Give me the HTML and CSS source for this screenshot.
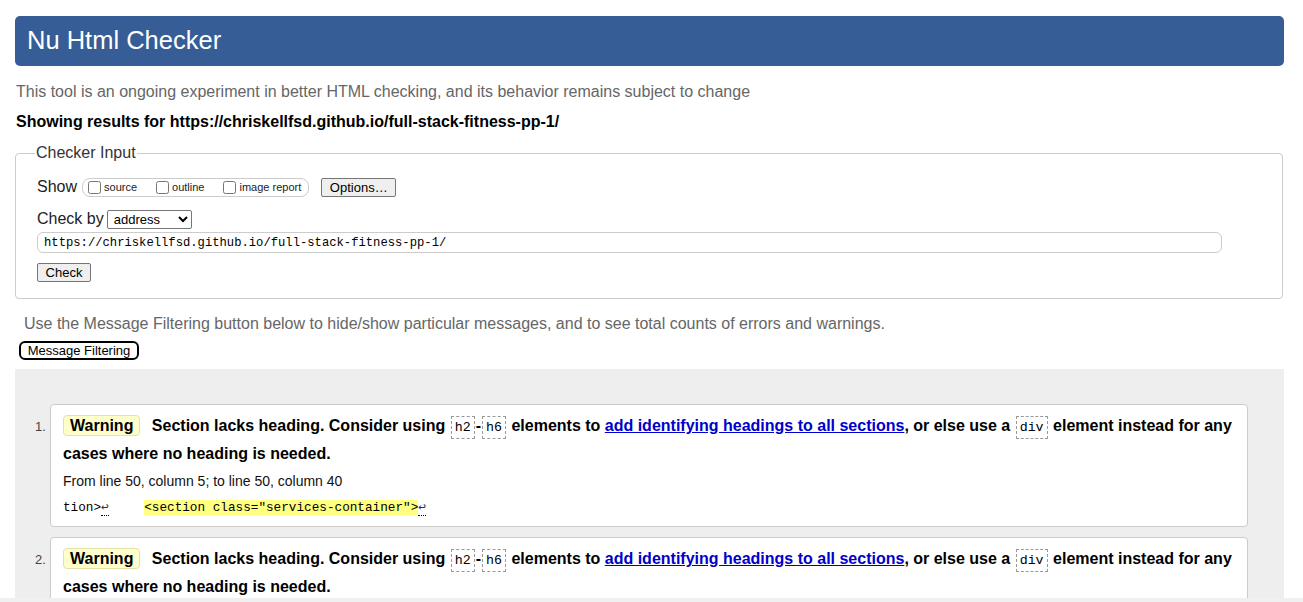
FILE: index.html
```html
<!DOCTYPE html>
<html lang="en">
<head>
<meta charset="utf-8">
<title>Showing results for https://chriskellfsd.github.io/full-stack-fitness-pp-1/ - Nu Html Checker</title>
<link rel="stylesheet" href="styles.css">
</head>
<body>
<div class="page">
  <header class="title-bar"><h1>Nu Html Checker</h1></header>
  <p class="intro">This tool is an ongoing experiment in better HTML checking, and its behavior remains subject to change</p>
  <p class="results-for">Showing results for https://chriskellfsd.github.io/full-stack-fitness-pp-1/</p>

  <fieldset class="checker">
    <legend>Checker Input</legend>
    <div class="show-row">
      <span class="lbl">Show</span>
      <span class="opts">
        <label><input type="checkbox">source</label>
        <label><input type="checkbox">outline</label>
        <label><input type="checkbox">image report</label>
      </span>
      <button class="btn">Options…</button>
    </div>
    <div class="checkby-row">
      <span class="lbl">Check by</span>
      <select class="sel"><option>address</option></select>
    </div>
    <input class="url" type="text" value="https://chriskellfsd.github.io/full-stack-fitness-pp-1/">
    <div class="check-row"><button class="btn">Check</button></div>
  </fieldset>

  <p class="filter-note">Use the Message Filtering button below to hide/show particular messages, and to see total counts of errors and warnings.</p>
  <button class="filter-btn">Message Filtering</button>

  <div class="results">
    <ol class="messages">
      <li class="msg">
        <p class="msg-text"><span class="badge">Warning</span> Section lacks heading. Consider using <code>h2</code>-<code>h6</code> elements to <a href="#">add identifying headings to all sections</a>, or else use a <code>div</code> element instead for any cases where no heading is needed.</p>
        <p class="loc">From line 50, column 5; to line 50, column 40</p>
        <p class="extract">tion&gt;<span class="lf first">↩</span>    <mark>&lt;section class="services-container"&gt;</mark><span class="lf">↩</span></p>
      </li>
      <li class="msg">
        <p class="msg-text"><span class="badge">Warning</span> Section lacks heading. Consider using <code>h2</code>-<code>h6</code> elements to <a href="#">add identifying headings to all sections</a>, or else use a <code>div</code> element instead for any cases where no heading is needed.</p>
        <p class="loc">From line 56, column 5; to line 56, column 40</p>
        <p class="extract">tion&gt;<span class="lf first">↩</span>    <mark>&lt;section class="services-container"&gt;</mark><span class="lf">↩</span></p>
      </li>
    </ol>
  </div>
</div>
<div class="bottom-edge"></div>
</body>
</html>
```

FILE: styles.css
```css
html, body {
  margin: 0;
  padding: 0;
  background: #fff;
}
body {
  font-family: "Liberation Sans", Arial, sans-serif;
  font-size: 16px;
  color: #000;
  overflow: hidden;
}
.page {
  padding: 16px 19px 0 15px;
}
.title-bar {
  background: #365d95;
  border-radius: 5px;
  height: 50px;
  display: flex;
  align-items: center;
  padding: 0 12px;
}
.title-bar h1 {
  margin: 0;
  font-size: 25.5px;
  font-weight: normal;
  color: #fff;
  line-height: 1;
}
.intro {
  margin: 17px 0 0 1px;
  color: #666;
  line-height: 18px;
}
.results-for {
  margin: 12px 0 0 1px;
  font-weight: bold;
  line-height: 18px;
}
.checker {
  margin: 13px 1px 0 0;
  border: 1px solid #ccc;
  border-radius: 4px;
  padding: 6px 21px 16px 21px;
}
.checker legend {
  color: #333;
  padding: 0 1px;
  margin-left: -2px;
  line-height: 18px;
}
.lbl {
  color: #222;
}
.show-row {
  display: flex;
  align-items: center;
  height: 20px;
  margin-top: 9px;
}
.opts {
  display: inline-flex;
  align-items: center;
  margin-left: 5px;
  border: 1px solid #ccc;
  border-radius: 8px;
  height: 17px;
  padding: 0 7px 0 5px;
  font-size: 11px;
  color: #222;
}
.opts label {
  display: inline-flex;
  align-items: center;
  margin-right: 19px;
}
.opts label:last-child {
  margin-right: 0;
}
.opts input {
  margin: 0 3px 0 0;
  width: 13px;
  height: 13px;
}
.btn {
  font-family: "Liberation Sans", Arial, sans-serif;
  font-size: 13px;
  background: #efefef;
  border: 1px solid #767676;
  border-radius: 2px;
  color: #000;
  padding: 1px 6px;
  height: 19px;
  line-height: 15px;
}
.show-row .btn {
  margin-left: 12px;
  width: 75px;
}
.checkby-row {
  display: flex;
  align-items: center;
  margin-top: 12px;
  height: 20px;
}
.sel {
  margin-left: 3px;
  width: 85px;
  height: 19px;
  font-family: "Liberation Sans", Arial, sans-serif;
  font-size: 13px;
  border: 1px solid #767676;
  border-radius: 2px;
  background: #fff;
  padding: 0 2px;
}
.url {
  display: block;
  box-sizing: border-box;
  width: 1185px;
  height: 21px;
  margin-top: 3px;
  border: 1px solid #ccc;
  border-radius: 6px;
  padding: 0 6px;
  font-family: "Liberation Mono", monospace;
  font-size: 12.2px;
  color: #000;
}
.check-row {
  margin-top: 10px;
}
.check-row .btn {
  width: 54px;
}
.filter-note {
  margin: 16px 0 0 9px;
  color: #666;
  line-height: 18px;
}
.filter-btn {
  display: block;
  margin: 8px 0 0 4px;
  width: 120px;
  height: 19px;
  padding: 0;
  background: #fff;
  border: 2px solid #000;
  border-radius: 6px;
  font-family: "Liberation Sans", Arial, sans-serif;
  font-size: 13px;
  color: #000;
  line-height: 14px;
}
.results {
  margin-top: 9px;
  background: #eee;
  padding: 35px 0 20px 0;
}
.messages {
  margin: 0;
  padding: 0 36px 0 35px;
  list-style: none;
  counter-reset: m;
}
.msg {
  counter-increment: m;
  position: relative;
  margin-left: 0;
  margin-bottom: 10px;
  background: #fff;
  border: 1px solid #ccc;
  border-radius: 4px;
  padding: 7px 10px 4px 12px;
}
.msg::before {
  content: counter(m) ".";
  position: absolute;
  left: -16px;
  top: 14px;
  font-size: 13px;
  color: #444;
}
.msg p {
  margin: 0;
}
.msg-text {
  font-weight: bold;
  line-height: 28px;
}
.badge {
  display: inline-block;
  background: #ffffcc;
  border: 1px solid #e4e0a8;
  border-radius: 4px;
  padding: 0 6px;
  line-height: 19px;
  margin-right: 7px;
}
.msg-text code {
  font-family: "Liberation Mono", monospace;
  font-weight: normal;
  font-size: 13.3px;
  line-height: 1;
  border: 1px dashed #999;
  padding: 3px 3px;
  margin: 0 1px;
}
.msg-text a {
  color: #0000cc;
}
.loc {
  font-size: 14px;
  line-height: 26px;
  color: #111;
  margin-top: 0;
}
.extract {
  font-family: "Liberation Mono", monospace;
  font-size: 12.7px;
  line-height: 28px;
  white-space: pre;
}
.extract mark {
  background: #ffff80;
  color: #000;
}
.lf {
  border-bottom: 1px dotted #000;
  color: #333;
}
.lf.first {
  margin-right: 5px;
}
.bottom-edge {
  position: fixed;
  left: 0;
  right: 0;
  bottom: 0;
  height: 4px;
  background: #f0f0f0;
}
```
